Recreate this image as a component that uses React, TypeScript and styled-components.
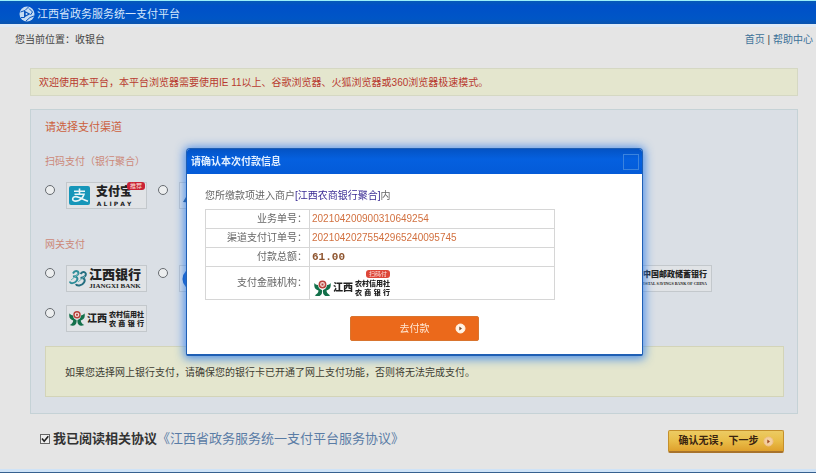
import React, { useState } from "react";
import styled, { createGlobalStyle } from "styled-components";

const GlobalStyle = createGlobalStyle`
  *, *::before, *::after { box-sizing: border-box; }
  body {
    margin: 0;
    background: #e5e5e5;
    color: #444;
    font: 10px/14px "Liberation Sans", "Noto Sans CJK SC", sans-serif;
  }
  a { text-decoration: none; }
  h1, h2, h3, p { margin: 0; font-size: inherit; font-weight: inherit; }
`;

const Page = styled.div`
  border-top: 1px solid #9beefa;
  border-bottom: 1px solid #36608f;
`;

const Header = styled.header`
  display: flex;
  align-items: center;
  gap: 2px;
  height: 26px;
  padding: 3px 19px 0;
  background: linear-gradient(#0759b8, #0050c8 5px, #0056c6 18px, #0b54ad);
  border-bottom: 3px solid #dfeaf6;
  color: #d3e6fb;
`;

const SiteName = styled.h1`
  font-size: 11px;
  line-height: 16px;
`;

const TopBar = styled.nav`
  display: flex;
  justify-content: space-between;
  align-items: center;
  height: 26px;
  padding: 0 3px 0 15px;
`;

const TopLink = styled.a`
  color: #3d7299;
`;

const Main = styled.main`
  margin: 15px 18px 0 30px;
`;

const Notice = styled.p<{ $tone: "warning" | "info" }>`
  display: flex;
  align-items: center;
  min-height: ${(p) => (p.$tone === "warning" ? 28 : 51)}px;
  margin-top: ${(p) => (p.$tone === "warning" ? 0 : 14)}px;
  padding: 2px ${(p) => (p.$tone === "warning" ? 8 : 19)}px 0;
  border: 1px solid ${(p) => (p.$tone === "warning" ? "#d5d8c3" : "#d3d4b8")};
  background: #e4e6ce;
  color: ${(p) => (p.$tone === "warning" ? "#b83a30" : "#3d3d33")};
`;

const Panel = styled.section`
  margin-top: 13px;
  padding: 9px 13px 16px 14px;
  border: 1px solid #c5d2d6;
  background: #dadfe5;
`;

const PanelTitle = styled.h2`
  font-size: 11px;
  line-height: 16px;
  color: #cc5f3d;
`;

const GroupTitle = styled.h3<{ $first?: boolean }>`
  margin: ${(p) => (p.$first ? 20 : 29)}px 0 13px;
  line-height: 14px;
  color: #cc8878;
`;

const Options = styled.div`
  display: grid;
  grid-template-columns: repeat(6, 113px);
  row-gap: 13px;
`;

const Option = styled.label<{ $column?: number }>`
  display: flex;
  align-items: flex-start;
  gap: 11px;
  ${(p) => (p.$column ? `grid-column: ${p.$column};` : "")}
`;

const Radio = styled.input`
  appearance: none;
  width: 10px;
  height: 10px;
  margin: 3px 0 0;
  border: 1px solid #666b70;
  border-radius: 50%;
  background: #eceeef;
  &:checked { background: radial-gradient(#333 2px, #eceeef 3px); }
`;

const Card = styled.span<{ $gap: number }>`
  position: relative;
  display: flex;
  align-items: center;
  gap: ${(p) => p.$gap}px;
  width: 81px;
  height: 27px;
  padding: 0 2px;
  border: 1px solid #c3c8cc;
  background: #e0e3e6;
  color: #222;
  white-space: nowrap;
`;

const Stack = styled.span<{ $align?: string }>`
  display: flex;
  flex-direction: column;
  align-items: ${(p) => p.$align || "center"};
`;

const Name = styled.span<{ $size: number; $line: number }>`
  font-size: ${(p) => p.$size}px;
  line-height: ${(p) => p.$line}px;
  font-weight: 900;
`;

const Latin = styled.span<{ $size: number; $serif?: boolean }>`
  font-family: ${(p) => (p.$serif ? '"Liberation Serif"' : '"DejaVu Sans"')}, sans-serif;
  font-size: ${(p) => p.$size}px;
  line-height: 7px;
  font-weight: bold;
`;

const Spread = styled.span`
  display: flex;
  justify-content: space-between;
  align-self: stretch;
`;

const Badge = styled.span<{ $top: number; $right: number; $tint: string }>`
  position: absolute;
  top: ${(p) => p.$top}px;
  right: ${(p) => p.$right}px;
  padding: 0 3px;
  border-radius: 3px;
  background: ${(p) => p.$tint};
  color: #fbe0dc;
  font-size: 6px;
  line-height: 8px;
`;

const Footer = styled.footer`
  display: flex;
  justify-content: space-between;
  align-items: center;
  margin: 16px 32px 0 40px;
  padding-bottom: 16px;
`;

const Agreement = styled.div`
  display: flex;
  align-items: center;
  gap: 3px;
  margin-bottom: 5px;
  font-size: 13px;
  line-height: 18px;
`;

const AgreeLabel = styled.label`
  display: flex;
  align-items: center;
  gap: 3px;
  color: #333;
  font-weight: bold;
`;

const CheckWrap = styled.span`
  display: grid;
  width: 10px;
  height: 10px;
  & > * { grid-area: 1 / 1; }
  & > svg { pointer-events: none; }
  & > input:not(:checked) + svg { display: none; }
`;

const Check = styled.input`
  appearance: none;
  width: 10px;
  height: 10px;
  margin: 0;
  border: 1px solid #666;
  background: #eee;
`;

const AgreeLink = styled.a`
  margin-left: -3px;
  color: #5a7ca5;
`;

const NextButton = styled.button`
  display: flex;
  align-items: center;
  justify-content: center;
  gap: 4px;
  height: 23px;
  width: 116px;
  padding: 0;
  border: 1px solid #c5902b;
  border-bottom: 2px solid #a8732c;
  border-radius: 2px;
  background: linear-gradient(#eccb63, #e9bd48 50%, #dfa02c);
  color: #3a2410;
  font: bold 10px/14px "Liberation Sans", "Noto Sans CJK SC", sans-serif;
`;

const BottomEdge = styled.div`
  height: 3px;
  background: #cfe3f7;
`;

const Overlay = styled.div`
  position: fixed;
  inset: 0;
  display: flex;
  justify-content: center;
  align-items: flex-start;
  padding: 148px 0 0 13px;
`;

const Dialog = styled.section`
  width: 457px;
  border: 1px solid #1f5fb4;
  border-bottom-width: 2px;
  border-radius: 4px 4px 2px 2px;
  background: #fff;
  box-shadow: 0 1px 10px 2px rgba(55, 130, 235, 0.85);
`;

const DialogHeader = styled.header`
  display: flex;
  justify-content: space-between;
  align-items: center;
  height: 25px;
  padding: 0 3px 0 4px;
  border-radius: 3px 3px 0 0;
  background: linear-gradient(#0453c4, #0560df 40%, #045bd8);
  color: #e3f0ff;
`;

const DialogTitle = styled.h2`
  font-weight: bold;
`;

const CloseButton = styled.button`
  width: 16px;
  height: 16px;
  padding: 0;
  border: 1px solid #3b83de;
  background: transparent;
`;

const DialogBody = styled.div`
  padding: 15px 18px 13px;
  color: #666;
`;

const Merchant = styled.strong`
  color: #3a2b94;
  font-weight: normal;
`;

const Details = styled.table`
  width: 350px;
  margin-top: 6px;
  border-collapse: collapse;
  th, td {
    height: 19px;
    padding: 0 2px;
    border: 1px solid #d6d6d6;
    line-height: 14px;
  }
  th {
    width: 104px;
    text-align: right;
    font-weight: normal;
  }
  td { color: #d2703f; }
  tr:last-child > * { height: 33px; }
`;

const Amount = styled.span`
  color: #8f552f;
  font-family: "Liberation Mono", monospace;
  font-size: 11px;
  font-weight: bold;
`;

const Institution = styled.span`
  position: relative;
  display: inline-flex;
  align-items: center;
  gap: 2px;
  padding: 10px 0 0 2px;
  color: #222;
  vertical-align: bottom;
`;

const PayButton = styled.button`
  display: grid;
  grid-template-columns: 1fr auto 1fr;
  align-items: center;
  width: 129px;
  height: 25px;
  margin: 16px 0 0 145px;
  padding: 0;
  border: 1px solid #d9742e;
  border-radius: 2px;
  background: #eb691b;
  color: #ffe6d2;
  font: 10px/14px "Liberation Sans", "Noto Sans CJK SC", sans-serif;
  & > span { grid-column: 2; }
  & > svg { justify-self: center; margin-left: 14px; }
`;

const RuralLines = styled(Stack)`
  font-size: 7px;
  line-height: 9px;
  font-weight: 900;
`;

const PostalLines = styled(Stack)`
  margin: 0 2px 0 auto;
`;

const SiteLogo = () => (
  <svg width="16" height="16" viewBox="0 0 16 16" fill="none" aria-hidden="true">
    <circle cx="8" cy="8" r="7.5" fill="#c5dcf3" />
    <path d="M6 5 11.500 8 6 11Z" fill="#0b55bd" />
    <path d="M1.500 6 6 4.500 9.500 1M2 11.500 5.500 11.500 5.500 5M7 15 11 11.500 15 10M10 2.500 13.500 6 11.500 9" stroke="#0b55bd" strokeWidth="1" />
    <circle cx="7.500" cy="8" r="1" fill="#c5dcf3" />
  </svg>
);

const AlipayLogo = () => (
  <svg width="21" height="19" viewBox="0 0 21 19" fill="none" aria-hidden="true">
    <rect width="21" height="19" rx="2" fill="#1696b9" />
    <path d="M5 5.2h11M10.5 2.5v6M5.5 8.3h9.5c-.8 3.2-4 6.8-8 6.8-2.6 0-3.6-1.2-3.3-2.5.4-2 3.3-2.4 5.8-1.4 2.7 1 5.5 2.8 9.5 4.1" stroke="#e8f5f8" strokeWidth="1.6" />
  </svg>
);

const JiangxiLogo = () => (
  <svg width="18" height="17" viewBox="0 0 18 17" fill="none" aria-hidden="true">
    <path d="M4 3.5C6-.5 11 1 9 4.500 7.500 6.500 5 6.500 4 6.500c4-.5 5.500 2 3.500 4.500C5.500 13.500 1 14 1 11.500" stroke="#2d8d98" strokeWidth="2" />
    <path d="M11.500 4C13.500.5 18 2 16.500 5.500 15.500 7.500 13 7.800 11.500 8c4-.5 5 2 3.500 4.500-2 3.500-7.500 4-8 1.500" stroke="#256f80" strokeWidth="2" />
    <path d="M2 10 9.500 4M9 12 16 6" stroke="#6bb5b8" strokeWidth="1" />
  </svg>
);

const RuralLogo = () => (
  <svg width="17" height="17" viewBox="0 0 17 17" fill="none" aria-hidden="true">
    <path d="M.5 3C-.5 8 1.500 9.500 4.500 10.500 4.500 12.500 3 14 .8 15.500c4 1.500 8 .5 7.200-5.500C6.500 9.500 4.500 8.500 4 5 2.500 5.200 1.200 4.200.5 3Z" fill="#12704a" />
    <path d="M16.500 3c1 5-1 6.500-4 7.500 0 2 1.500 3.500 3.700 5-4 1.500-8 .5-7.200-5.500 1.500-.5 3.500-1.500 4-5 1.500.2 2.800-.8 3.500-2Z" fill="#12704a" />
    <circle cx="8.500" cy="4.500" r="3.200" fill="#f2dfda" stroke="#b8403a" strokeWidth="1.500" />
    <rect x="7.500" y="3.500" width="2" height="2" fill="#b8403a" />
  </svg>
);

const BlueLogo = () => (
  <svg width="22" height="22" viewBox="0 0 22 22" aria-hidden="true">
    <circle cx="11" cy="11" r="10.5" fill="#0750b8" />
    <path d="M8 8h8v6H8zM12 4v14" fill="none" stroke="#e4edf6" strokeWidth="1.5" />
  </svg>
);

const UnionLogo = () => (
  <svg width="20" height="20" viewBox="0 0 20 20" aria-hidden="true">
    <path d="M1 16 4 11l4-6 9 3-5 9Z" fill="#17477d" />
  </svg>
);

const ArrowDot = ({ fill, ring, arrow }: { fill: string; ring: string; arrow: string }) => (
  <svg width="11" height="11" viewBox="0 0 11 11" aria-hidden="true">
    <circle cx="5.5" cy="5.5" r="4.5" fill={fill} stroke={ring} />
    <path d="M4.3 3.5 7 5.5 4.3 7.5Z" fill={arrow} />
  </svg>
);

const RuralBrand = () => (
  <>
    <RuralLogo />
    <Name $size={10} $line={14}>江西</Name>
    <RuralLines $align="stretch">
      <span>农村信用社</span>
      <Spread>
        <span>农</span><span>商</span><span>银</span><span>行</span>
      </Spread>
    </RuralLines>
  </>
);

const PostalBrand = () => (
  <PostalLines $align="flex-end">
    <Name $size={8} $line={10}>中国邮政储蓄银行</Name>
    <Latin $size={4} $serif>POSTAL SAVINGS BANK OF CHINA</Latin>
  </PostalLines>
);

type BankProps = {
  value: string;
  label: string;
  column?: number;
  gap?: number;
  selected: string;
  onSelect: (value: string) => void;
  children: React.ReactNode;
};

const Bank = ({ value, label, column, gap = 2, selected, onSelect, children }: BankProps) => (
  <Option $column={column}>
    <Radio
      type="radio"
      name="channel"
      aria-label={label}
      checked={selected === value}
      onChange={() => onSelect(value)}
    />
    <Card $gap={gap}>{children}</Card>
  </Option>
);

export default function App() {
  const [channel, setChannel] = useState("");
  const [agreed, setAgreed] = useState(true);
  const [open, setOpen] = useState(true);
  const bank = { selected: channel, onSelect: setChannel };

  return (
    <>
      <GlobalStyle />
      <Page lang="zh-CN">
        <Header>
          <SiteLogo />
          <SiteName>江西省政务服务统一支付平台</SiteName>
        </Header>
        <TopBar>
          <span>您当前位置：收银台</span>
          <span>
            <TopLink href="#home">首页</TopLink> | <TopLink href="#help">帮助中心</TopLink>
          </span>
        </TopBar>
        <Main>
          <Notice $tone="warning">
            欢迎使用本平台，本平台浏览器需要使用IE 11以上、谷歌浏览器、火狐浏览器或360浏览器极速模式。
          </Notice>
          <Panel>
            <PanelTitle>请选择支付渠道</PanelTitle>
            <GroupTitle $first>扫码支付（银行聚合）</GroupTitle>
            <Options>
              <Bank {...bank} value="alipay" label="支付宝" gap={6}>
                <AlipayLogo />
                <Stack>
                  <Name $size={12} $line={16}>支付宝</Name>
                  <Latin $size={6}>A L I P A Y</Latin>
                </Stack>
                <Badge $top={-1} $right={1} $tint="#c92236">推荐</Badge>
              </Bank>
              <Bank {...bank} value="scan" label="扫码支付">
                <UnionLogo />
              </Bank>
            </Options>
            <GroupTitle>网关支付</GroupTitle>
            <Options>
              <Bank {...bank} value="jiangxi" label="江西银行">
                <JiangxiLogo />
                <Stack>
                  <Name $size={13} $line={16}>江西银行</Name>
                  <Latin $size={7} $serif>JIANGXI BANK</Latin>
                </Stack>
              </Bank>
              <Bank {...bank} value="gateway" label="网关支付">
                <BlueLogo />
              </Bank>
              <Bank {...bank} value="postal" label="中国邮政储蓄银行" column={6}>
                <PostalBrand />
              </Bank>
              <Bank {...bank} value="rural" label="江西农商银行">
                <RuralBrand />
              </Bank>
            </Options>
            <Notice $tone="info">
              如果您选择网上银行支付，请确保您的银行卡已开通了网上支付功能，否则将无法完成支付。
            </Notice>
          </Panel>
        </Main>
        <Footer>
          <Agreement>
            <AgreeLabel>
              <CheckWrap>
                <Check type="checkbox" checked={agreed} onChange={() => setAgreed(!agreed)} />
                <svg width="10" height="10" viewBox="0 0 10 10" fill="none" aria-hidden="true">
                  <path d="M2 4.5 4.2 7.2 8.3 2.2" stroke="#222" strokeWidth="1.6" />
                </svg>
              </CheckWrap>
              我已阅读相关协议
            </AgreeLabel>
            <AgreeLink href="#agreement">《江西省政务服务统一支付平台服务协议》</AgreeLink>
          </Agreement>
          <NextButton type="button" onClick={() => setOpen(true)}>
            确认无误，下一步
            <ArrowDot fill="#f3cfa0" ring="#f0c08a" arrow="#a04a20" />
          </NextButton>
        </Footer>
        <BottomEdge />
      </Page>

      {open && (
        <Overlay>
          <Dialog role="dialog" aria-modal="true" aria-labelledby="confirm-title" lang="zh-CN">
            <DialogHeader>
              <DialogTitle id="confirm-title">请确认本次付款信息</DialogTitle>
              <CloseButton type="button" aria-label="关闭" onClick={() => setOpen(false)} />
            </DialogHeader>
            <DialogBody>
              <p>您所缴款项进入商户<Merchant>[江西农商银行聚合]</Merchant>内</p>
              <Details>
                <tbody>
                  <tr><th scope="row">业务单号：</th><td>202104200900310649254</td></tr>
                  <tr><th scope="row">渠道支付订单号：</th><td>20210420275542965240095745</td></tr>
                  <tr><th scope="row">付款总额：</th><td><Amount>61.00</Amount></td></tr>
                  <tr>
                    <th scope="row">支付金融机构：</th>
                    <td>
                      <Institution>
                        <RuralBrand />
                        <Badge $top={1} $right={0} $tint="#dd4638">扫码付</Badge>
                      </Institution>
                    </td>
                  </tr>
                </tbody>
              </Details>
              <PayButton type="button">
                <span>去付款</span>
                <ArrowDot fill="#fff3e6" ring="#fff3e6" arrow="#7a4a2a" />
              </PayButton>
            </DialogBody>
          </Dialog>
        </Overlay>
      )}
    </>
  );
}
